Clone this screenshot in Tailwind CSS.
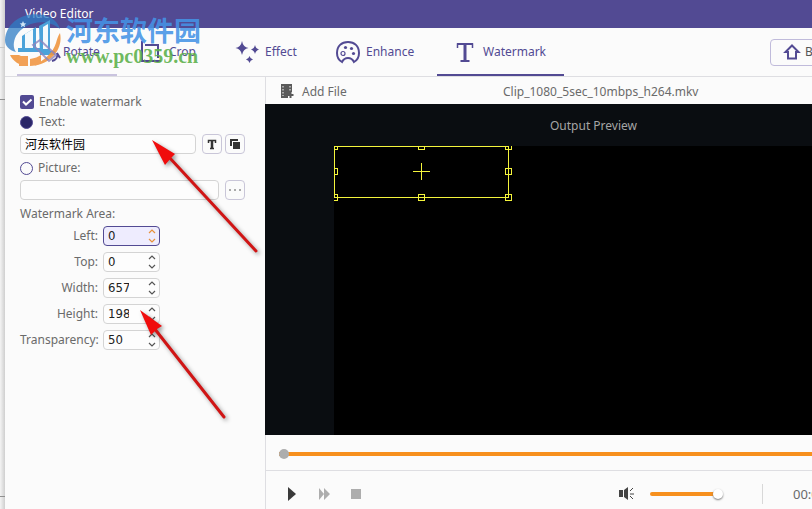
<!DOCTYPE html>
<html lang="en">
<head>
    <meta charset="UTF-8">
    <meta name="viewport" content="width=device-width, initial-scale=1.0">
    <title>Video Editor</title>
    <script src="https://cdn.jsdelivr.net/npm/@tailwindcss/browser@4"></script>
</head>
<body class="relative flex min-h-screen overflow-hidden bg-[#fbfbfb] font-['Noto_Sans','Noto_Sans_CJK_SC',sans-serif] text-xs text-[#6a6a6a]">

    <!-- Edge of the window behind -->
    <div class="flex w-[5px] shrink-0 flex-col bg-linear-to-r from-[#f4f4f4] to-[#cfcfcf]">
        <div class="h-12 border-b border-[#c8c8c8]"></div>
        <div class="h-[52px] border-b border-[#909090]"></div>
        <div class="grow border-b border-[#909090]"></div>
        <div class="h-3"></div>
    </div>

    <div class="flex min-w-[917px] grow flex-col">
        <!-- Title bar -->
        <header class="flex h-7 items-center bg-[#524a93] px-5 text-white">
            <h1>Video Editor</h1>
        </header>

        <!-- Tabs -->
        <div class="flex h-[49px] items-stretch border-b border-[#dedee2] pr-4 pl-3 text-[#524a93]">
            <nav class="flex">
                <button class="flex w-[100px] items-center gap-[2px] border-b-2 border-[#c9c3de] px-5 pt-[2px]">
                    <svg class="size-6 shrink-0" viewBox="0 0 24 24" fill="none" stroke="currentColor" stroke-width="2"><path d="M15 21c4-1 6-4 5-8l3 5"/></svg>
                    Rotate
                </button>
                <button class="flex w-[98px] items-center gap-2 px-5">
                    <svg class="size-6 shrink-0" viewBox="0 0 24 24" fill="none" stroke="currentColor" stroke-width="2"><path d="M5 1v20h19M8 5h13v13"/></svg>
                    Crop
                </button>
                <button class="flex w-[101px] items-center gap-[6px] px-5">
                    <svg class="size-6 shrink-0" viewBox="0 0 24 24" fill="currentColor"><path d="M7 1q1 6 6.500 7Q8 9 7 15 6 9 .5 8 6 7 7 1zM20 5q.7 3.500 4 4.500-3.300 1-4 4.500-.7-3.500-4-4.500 3.300-1 4-4.500zM14.500 16q.6 2.600 3.500 3.500-2.900.9-3.500 3.500-.6-2.600-3.500-3.500 2.900-.9 3.500-3.500z"/></svg>
                    Effect
                </button>
                <button class="flex w-[121px] items-center gap-[6px] px-5">
                    <svg class="size-6 shrink-0" viewBox="0 0 24 24" fill="none" stroke="currentColor" stroke-width="2"><path d="M6 22C2.500 20 1 16.500 1 13 1 6 5.500 2 12 2s11 4 11 11c0 3.500-1.500 7-5 9-1.500-3-3.500-4-6-4s-4.500 1-6 4z"/><circle cx="7" cy="13.500" r="2" stroke-width="1.200"/><g fill="currentColor" stroke="none"><circle cx="9.500" cy="7.500" r="1.600"/><circle cx="15.500" cy="8.500" r="1.600"/><circle cx="17.500" cy="13.500" r="1.600"/></g></svg>
                    Enhance
                </button>
                <button class="flex w-[127px] items-center gap-[6px] border-b-2 border-[#524a93] px-4 pt-[2px]">
                    <svg class="size-6 shrink-0" viewBox="0 0 24 24" fill="none" stroke="currentColor"><path d="M4.500 8V4h15v4" stroke-width="1.500"/><path d="M12 4v17" stroke-width="3"/><path d="M4 4h16M7.500 21h9" stroke-width="2"/></svg>
                    Watermark
                </button>
            </nav>
            <button class="my-auto ml-auto flex h-[27px] w-[136px] items-center gap-1 rounded-sm border border-[#c0bbdb] px-3 text-[#555]">
                <svg class="size-[18px] text-[#524a93]" viewBox="0 0 18 18" fill="none" stroke="currentColor" stroke-width="2"><path d="M9 2.500L15.500 9H13v6.500H5V9H2.500z"/></svg>
                Back to Home
            </button>
        </div>

        <div class="flex grow">
            <!-- Watermark settings -->
            <aside class="w-[260px] shrink-0 pt-[15px] pr-5 pl-[15px]">
                <label class="flex h-5 items-center gap-1">
                    <input type="checkbox" checked class="peer sr-only">
                    <svg class="size-[15px]" viewBox="0 0 15 15"><rect x="0" y="0" width="14" height="14" rx="2" fill="#524a93"/><path d="M3 6.500l3 3L11.500 4.500" fill="none" stroke="#fff" stroke-width="2"/></svg>
                    Enable watermark
                </label>
                <label class="flex h-5 items-center gap-[6px]">
                    <input type="radio" name="kind" checked class="size-[13px] appearance-none rounded-full border border-[#524a93] checked:bg-[#2a2668]">
                    Text:
                </label>
                <div class="mt-[2px] flex gap-[6px]">
                    <input type="text" aria-label="Watermark text" value="河东软件园" class="h-5 min-w-0 grow rounded-sm border border-[#d4d4d4] bg-[#fdfdfd] px-1 text-black">
                    <div class="flex gap-[3px]">
                        <button aria-label="Font" class="flex size-5 items-center justify-center rounded-sm border border-[#c9c6d8] text-[#333]">
                            <svg class="size-3" viewBox="0 0 12 12" fill="none" stroke="currentColor"><path d="M2.500 5V2.500h7V5" stroke-width="1.500"/><path d="M6 2v8" stroke-width="2.500"/><path d="M4 10.500h4" stroke-width="1.500"/></svg>
                        </button>
                        <button aria-label="Colour" class="flex size-5 items-center justify-center rounded-sm border border-[#c9c6d8] text-[#333]">
                            <svg class="size-3" viewBox="0 0 12 12"><path d="M2 8V2h7" fill="none" stroke="currentColor" stroke-width="2"/><rect x="4" y="4" width="7" height="7" fill="currentColor"/></svg>
                        </button>
                    </div>
                </div>
                <label class="mt-1 flex h-5 items-center gap-[5px]">
                    <input type="radio" name="kind" class="size-[13px] appearance-none rounded-full border border-[#524a93] checked:bg-[#2a2668]">
                    Picture:
                </label>
                <div class="mt-[2px] flex gap-[6px]">
                    <input type="text" aria-label="Picture file" class="h-5 min-w-0 grow rounded-sm border border-[#d4d4d4] bg-[#fdfdfd] px-1">
                    <button aria-label="Browse" class="flex size-5 items-center justify-center rounded-sm border border-[#c9c6d8] text-[#aaa]">
                        <svg class="size-3" viewBox="0 0 12 12" fill="currentColor"><path d="M0 5h2v2H0zM5 5h2v2H5zM10 5h2v2h-2z"/></svg>
                    </button>
                </div>
                <h2 class="mt-1 leading-5">Watermark Area:</h2>

                <div class="mt-[2px] grid grid-cols-[78px_57px] items-center gap-x-[5px] gap-y-[6px] text-right">
                    <label for="left">Left:</label>
                    <div class="flex h-5 items-center rounded-sm border border-[#524a93] bg-[#eeecfe] pr-[3px]">
                        <input id="left" type="number" value="0" class="w-0 grow px-1 font-['DejaVu_Sans_Condensed',sans-serif] text-[13px] text-[#222] outline-none [appearance:textfield]">
                        <div class="flex flex-col text-[#e8913a]">
                            <button aria-label="Left up" class="block h-2 w-2"><svg class="size-2" viewBox="0 0 8 8" fill="none" stroke="currentColor" stroke-width="1.200"><path d="M1 5l3-3 3 3"/></svg></button>
                            <button aria-label="Left down" class="block h-2 w-2"><svg class="size-2" viewBox="0 0 8 8" fill="none" stroke="currentColor" stroke-width="1.200"><path d="M1 3l3 3 3-3"/></svg></button>
                        </div>
                    </div>
                    <label for="top">Top:</label>
                    <div class="flex h-5 items-center rounded-sm border border-[#d4d4d4] bg-[#fdfdfd] pr-[3px]">
                        <input id="top" type="number" value="0" class="w-0 grow px-1 font-['DejaVu_Sans_Condensed',sans-serif] text-[13px] text-[#222] outline-none [appearance:textfield]">
                        <div class="flex flex-col text-[#555]">
                            <button aria-label="Top up" class="block h-2 w-2"><svg class="size-2" viewBox="0 0 8 8" fill="none" stroke="currentColor" stroke-width="1.200"><path d="M1 5l3-3 3 3"/></svg></button>
                            <button aria-label="Top down" class="block h-2 w-2"><svg class="size-2" viewBox="0 0 8 8" fill="none" stroke="currentColor" stroke-width="1.200"><path d="M1 3l3 3 3-3"/></svg></button>
                        </div>
                    </div>
                    <label for="width">Width:</label>
                    <div class="flex h-5 items-center rounded-sm border border-[#d4d4d4] bg-[#fdfdfd] pr-[3px]">
                        <input id="width" type="number" value="657" class="w-0 grow px-1 font-['DejaVu_Sans_Condensed',sans-serif] text-[13px] text-[#222] outline-none [appearance:textfield]">
                        <div class="flex flex-col text-[#555]">
                            <button aria-label="Width up" class="block h-2 w-2"><svg class="size-2" viewBox="0 0 8 8" fill="none" stroke="currentColor" stroke-width="1.200"><path d="M1 5l3-3 3 3"/></svg></button>
                            <button aria-label="Width down" class="block h-2 w-2"><svg class="size-2" viewBox="0 0 8 8" fill="none" stroke="currentColor" stroke-width="1.200"><path d="M1 3l3 3 3-3"/></svg></button>
                        </div>
                    </div>
                    <label for="height">Height:</label>
                    <div class="flex h-5 items-center rounded-sm border border-[#d4d4d4] bg-[#fdfdfd] pr-[3px]">
                        <input id="height" type="number" value="198" class="w-0 grow px-1 font-['DejaVu_Sans_Condensed',sans-serif] text-[13px] text-[#222] outline-none [appearance:textfield]">
                        <div class="flex flex-col text-[#555]">
                            <button aria-label="Height up" class="block h-2 w-2"><svg class="size-2" viewBox="0 0 8 8" fill="none" stroke="currentColor" stroke-width="1.200"><path d="M1 5l3-3 3 3"/></svg></button>
                            <button aria-label="Height down" class="block h-2 w-2"><svg class="size-2" viewBox="0 0 8 8" fill="none" stroke="currentColor" stroke-width="1.200"><path d="M1 3l3 3 3-3"/></svg></button>
                        </div>
                    </div>
                    <label for="transparency">Transparency:</label>
                    <div class="flex h-5 items-center rounded-sm border border-[#d4d4d4] bg-[#fdfdfd] pr-[3px]">
                        <input id="transparency" type="number" value="50" class="w-0 grow px-1 font-['DejaVu_Sans_Condensed',sans-serif] text-[13px] text-[#222] outline-none [appearance:textfield]">
                        <div class="flex flex-col text-[#555]">
                            <button aria-label="Transparency up" class="block h-2 w-2"><svg class="size-2" viewBox="0 0 8 8" fill="none" stroke="currentColor" stroke-width="1.200"><path d="M1 5l3-3 3 3"/></svg></button>
                            <button aria-label="Transparency down" class="block h-2 w-2"><svg class="size-2" viewBox="0 0 8 8" fill="none" stroke="currentColor" stroke-width="1.200"><path d="M1 3l3 3 3-3"/></svg></button>
                        </div>
                    </div>
                </div>
            </aside>

            <main class="flex min-w-0 grow flex-col border-l border-[#dedee2]">
                <div class="flex h-[27px] items-center pt-[2px] pl-[14px]">
                    <button class="flex w-[223px] items-center gap-[6px]">
                        <svg class="size-4" viewBox="0 0 16 16"><path d="M1 0h11v8h-2v2H8v4H1z" fill="#5a5a5a"/><path d="M3 2v10M10 2v5" stroke="#fbfbfb" stroke-dasharray="1.500 1.500"/><path d="M10.500 8v6M7.500 11h6" stroke="#5a5a5a" stroke-width="2"/></svg>
                        Add File
                    </button>
                    <span>Clip_1080_5sec_10mbps_h264.mkv</span>
                </div>

                <!-- Preview -->
                <div class="-ml-px flex grow flex-col items-center bg-[#0a0d11]">
                    <h2 class="flex h-[42px] items-center pt-[2px] text-[#a5a5a5]">Output Preview</h2>
                    <div class="relative w-[519px] grow bg-black">
                        <svg class="absolute top-0 left-0 h-[55px] w-[179px]" viewBox="0 0 179 55" fill="none" stroke="#f4f43c" shape-rendering="crispEdges">
                            <path d="M.5.500h174v51H.500z"/>
                            <path d="M-2.500-2.500h6v6h-6zM84.500-2.500h6v6h-6zM171.500-2.500h6v6h-6zM-2.500 22.500h6v6h-6zM171.500 22.500h6v6h-6zM-2.500 48.500h6v6h-6zM84.500 48.500h6v6h-6zM171.500 48.500h6v6h-6z"/>
                            <path d="M79 25.500h17M87.500 17v17"/>
                        </svg>
                    </div>
                </div>

                <!-- Playback -->
                <div class="flex h-9 items-center border-b border-[#dedee2] pt-[2px] pl-[13px]">
                    <input type="range" min="0" max="100" value="0" aria-label="Position" class="h-1 grow appearance-none bg-[#f7901e] [&::-webkit-slider-thumb]:size-[10px] [&::-webkit-slider-thumb]:appearance-none [&::-webkit-slider-thumb]:rounded-full [&::-webkit-slider-thumb]:bg-[#adadad]">
                </div>
                <div class="flex h-[38px] items-center pt-2 pr-4 pl-5">
                    <div class="flex gap-4">
                        <button aria-label="Play"><svg class="size-4" viewBox="0 0 16 16"><path d="M2 1l8 7-8 7z" fill="#3a3a3a"/></svg></button>
                        <button aria-label="Fast forward"><svg class="size-4" viewBox="0 0 16 16"><path d="M1 2l5 6-5 6zM6 2l6 6-6 6z" fill="#adadad"/></svg></button>
                        <button aria-label="Stop"><svg class="size-4" viewBox="0 0 16 16"><path d="M1 3h10v10H1z" fill="#adadad"/></svg></button>
                    </div>
                    <button aria-label="Mute" class="ml-auto"><svg class="size-4" viewBox="0 0 16 16"><path d="M1 4h4v7H1zM6 4l4-3v13l-4-3z" fill="#444"/><path d="M12 5l3-3M12 8h4M12 10l3 3" stroke="#444"/></svg></button>
                    <input type="range" min="0" max="100" value="100" aria-label="Volume" class="ml-4 h-1 w-[73px] appearance-none rounded-full bg-linear-to-r from-[#f7901e] from-90% to-transparent to-90% [&::-webkit-slider-thumb]:size-[10px] [&::-webkit-slider-thumb]:appearance-none [&::-webkit-slider-thumb]:rounded-full [&::-webkit-slider-thumb]:bg-white [&::-webkit-slider-thumb]:shadow-[0_1px_2px_#777]">
                    <div class="ml-[39px] h-5 border-l border-[#d8d8d8]"></div>
                    <time class="ml-[30px] w-[113px] pt-[2px] text-[13px] whitespace-nowrap">00:00:00/00:00:05</time>
                </div>
            </main>
        </div>
    </div>

    <!-- Site stamp -->
    <div class="pointer-events-none absolute top-[14px] left-0 flex gap-[2px]">
        <svg class="h-16 w-16" viewBox="0 0 64 64">
            <path d="M5 26C6 8 24-3 44 1c8 2 14 7 16 14C46 3 24 8 16 22c-3 6-3 12 0 16C9 36 5 32 5 26z" fill="#2f7cc4" opacity=".75"/>
            <path d="M22 22l14-9v21h5v4H18v-4h4z" fill="#4ba3da"/>
            <path d="M25 20l8-5v19h-8z" fill="#f4fafd"/>
            <path d="M39 12l11-6v31h5v4H40z" fill="#4ba3da"/>
            <path d="M43 13l5-3v25h-5z" fill="#f4fafd"/>
            <path d="M23 7l1 2.300 2.300.2-1.800 1.500.6 2.300-2.100-1.200-2.100 1.200.6-2.300-1.800-1.500 2.300-.2z" fill="#cfe5f5"/>
            <path d="M60 19c3 14-6 29-26 33 10-6 19-13 22-23 1-4 2-7 4-10z" fill="#f0963f" opacity=".9"/>
            <path d="M10 41h9c3 2 6 2 9 1v10c-9 0-15-5-18-11z" fill="#f0963f" opacity=".9"/>
            <path d="M19 42h9v10h-9zM30 45c5-1 8-2 11-4v8c-3 2-7 3-11 3z" fill="#f2a157"/>
            <path d="M33 31l7-5 16 15-7 6z" fill="none" stroke="#8c83bd" stroke-width="2" opacity=".8"/>
        </svg>
        <div class="flex flex-col">
            <span class="font-['Noto_Sans_CJK_SC',sans-serif] text-[27px] leading-8 font-bold text-[#4593e6]/90">河东软件园</span>
            <span class="font-['Liberation_Serif',serif] text-[20px] leading-5 font-bold text-[#5cb04a]/90">www.pc0359.cn</span>
        </div>
    </div>

    <!-- Pointer arrows -->
    <svg class="pointer-events-none absolute top-[136px] left-[148px] h-[122px] w-[116px] drop-shadow-[2px_2px_2px_#0006]" viewBox="0 0 116 122">
        <path d="M20 20L108 115" stroke="#d01515" stroke-width="3" stroke-linecap="round"/>
        <path d="M4 4l23 14-4 4-6 7z" fill="#f00c0c"/>
    </svg>
    <svg class="pointer-events-none absolute top-[306px] left-[136px] h-[118px] w-[96px] drop-shadow-[2px_2px_2px_#0006]" viewBox="0 0 96 118">
        <path d="M18 22L88 111" stroke="#d01515" stroke-width="3" stroke-linecap="round"/>
        <path d="M4 4l22 16-5 3-6 6z" fill="#f00c0c"/>
    </svg>
</body>
</html>
